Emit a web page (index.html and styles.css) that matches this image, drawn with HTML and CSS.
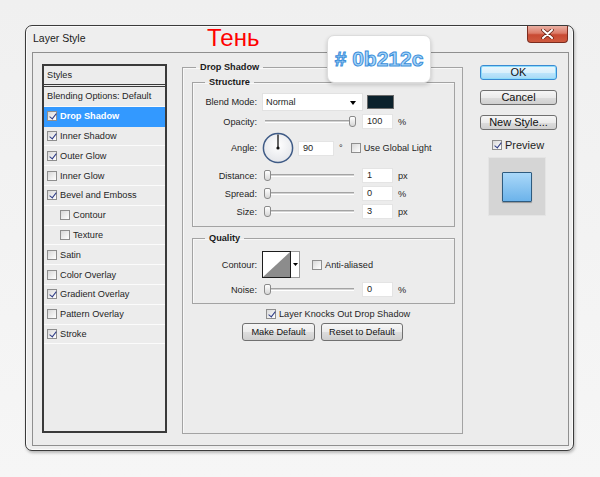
FILE: index.html
```html
<!DOCTYPE html>
<html lang="en">
<head>
    <meta charset="UTF-8">
    <meta name="viewport" content="width=device-width, initial-scale=1.0">
    <title>Layer Style</title>
    <link rel="stylesheet" href="styles.css">
</head>
<body>

    <div class="window">
        <div class="titlebar">
            <span class="title">Layer Style</span>
            <span class="close">
                <svg width="13" height="10" viewBox="0 0 13 10">
                    <path d="M2 1l9 8M11 1l-9 8" stroke="#6a2416" stroke-width="3.6" stroke-linecap="round"/>
                    <path d="M2 1l9 8M11 1l-9 8" stroke="#fff" stroke-width="2" stroke-linecap="round"/>
                </svg>
            </span>
        </div>

        <div class="note">Тень</div>
        <div class="hex-tip"># 0b212c</div>

        <div class="panel">
            <!-- left list of effects -->
            <div class="styles-list">
                <div class="list-head">Styles</div>
                <div class="list-row">Blending Options: Default</div>
                <div class="list-row active"><span class="cb on"></span>Drop Shadow</div>
                <div class="list-row"><span class="cb on"></span>Inner Shadow</div>
                <div class="list-row"><span class="cb on"></span>Outer Glow</div>
                <div class="list-row"><span class="cb"></span>Inner Glow</div>
                <div class="list-row"><span class="cb on"></span>Bevel and Emboss</div>
                <div class="list-row indent"><span class="cb"></span>Contour</div>
                <div class="list-row indent"><span class="cb"></span>Texture</div>
                <div class="list-row"><span class="cb"></span>Satin</div>
                <div class="list-row"><span class="cb"></span>Color Overlay</div>
                <div class="list-row"><span class="cb on"></span>Gradient Overlay</div>
                <div class="list-row"><span class="cb"></span>Pattern Overlay</div>
                <div class="list-row"><span class="cb on"></span>Stroke</div>
            </div>

            <!-- settings -->
            <div class="options">
                <fieldset class="group main">
                    <legend>Drop Shadow</legend>

                    <fieldset class="group section">
                        <legend>Structure</legend>
                        <div class="row blend">
                            <span class="lbl">Blend Mode:</span>
                            <span class="select">Normal<span class="caret"></span></span>
                            <span class="swatch"></span>
                        </div>
                        <div class="row">
                            <span class="lbl">Opacity:</span>
                            <span class="slider"><span class="track"></span><span class="thumb max"></span></span>
                            <span class="field">100</span>
                            <span class="unit">%</span>
                        </div>
                        <div class="row angle">
                            <span class="lbl">Angle:</span>
                            <svg class="dial" width="32" height="32" viewBox="0 0 32 32">
                                <defs>
                                    <radialGradient id="dialFill" cx="50%" cy="40%" r="60%">
                                        <stop offset="0" stop-color="#ffffff"/>
                                        <stop offset="1" stop-color="#e4e6ea"/>
                                    </radialGradient>
                                </defs>
                                <circle cx="16" cy="16" r="14.6" fill="url(#dialFill)" stroke="#3f5b86" stroke-width="1.5"/>
                                <path d="M16 16V2.5" stroke="#111" stroke-width="1.3"/>
                                <circle cx="16" cy="16" r="1.6" fill="#111"/>
                            </svg>
                            <span class="field wide">90</span>
                            <span class="unit">°</span>
                            <span class="cb global"></span>
                            <span class="cb-text">Use Global Light</span>
                        </div>
                        <div class="row gap4">
                            <span class="lbl">Distance:</span>
                            <span class="slider"><span class="track"></span><span class="thumb min"></span></span>
                            <span class="field">1</span>
                            <span class="unit">px</span>
                        </div>
                        <div class="row">
                            <span class="lbl">Spread:</span>
                            <span class="slider"><span class="track"></span><span class="thumb min"></span></span>
                            <span class="field">0</span>
                            <span class="unit">%</span>
                        </div>
                        <div class="row">
                            <span class="lbl">Size:</span>
                            <span class="slider"><span class="track"></span><span class="thumb min"></span></span>
                            <span class="field">3</span>
                            <span class="unit">px</span>
                        </div>
                    </fieldset>

                    <fieldset class="group section quality">
                        <legend>Quality</legend>
                        <div class="row contour">
                            <span class="lbl">Contour:</span>
                            <svg width="38" height="27" viewBox="0 0 38 27">
                                <rect x="0.5" y="0.5" width="37" height="26" fill="#fff" stroke="#9a9a9a"/>
                                <rect x="0.5" y="0.5" width="28" height="26" fill="#fff" stroke="#1d1d1d"/>
                                <polygon points="1,26 28,1 28,26" fill="#8c8c8c"/>
                                <polygon points="31,12 36,12 33.5,15" fill="#000"/>
                            </svg>
                            <span class="cb anti"></span>
                            <span class="cb-text">Anti-aliased</span>
                        </div>
                        <div class="row gap4">
                            <span class="lbl">Noise:</span>
                            <span class="slider"><span class="track"></span><span class="thumb min"></span></span>
                            <span class="field">0</span>
                            <span class="unit">%</span>
                        </div>
                    </fieldset>

                    <div class="knock">
                        <span class="cb on"></span>
                        <span class="cb-text">Layer Knocks Out Drop Shadow</span>
                    </div>

                    <div class="defaults">
                        <button class="btn make">Make Default</button>
                        <button class="btn reset">Reset to Default</button>
                    </div>
                </fieldset>
            </div>

            <!-- dialog buttons -->
            <div class="actions">
                <button class="btn act ok">OK</button>
                <button class="btn act">Cancel</button>
                <button class="btn act">New Style...</button>
                <div class="preview-toggle">
                    <span class="cb on"></span>
                    <span>Preview</span>
                </div>
                <div class="preview-box">
                    <span class="preview-square"></span>
                </div>
            </div>
        </div>
    </div>

</body>
</html>
```

FILE: styles.css
```css
* {
    box-sizing: border-box;
}
body {
    margin: 0;
    padding: 25px 0 0 25px;
    min-height: 100vh;
    background: linear-gradient(#f0f0f0, #f6f6f6);
    font: 9.2px "Liberation Sans", Arial, sans-serif;
    color: #1f1f1f;
}
.window {
    position: relative;
    width: 549px;
    height: 426px;
    border: 1px solid #3b3b3b;
    border-radius: 7px;
    background: #eeeeee;
    box-shadow: inset 0 0 0 1px #fbfbfb, 1px 2px 3px rgba(0, 0, 0, 0.25);
    display: flex;
    flex-direction: column;
}
.titlebar {
    height: 26px;
    flex: none;
    display: flex;
    justify-content: space-between;
    align-items: flex-start;
    padding: 0 5px 0 7px;
}
.title {
    padding-top: 5px;
    font-size: 10.5px;
    line-height: 14px;
    color: #1b1b1b;
}
.close {
    width: 41px;
    height: 17px;
    display: flex;
    align-items: center;
    justify-content: center;
    border: 1px solid #7b2c1f;
    border-top: none;
    border-radius: 0 0 4px 4px;
    background: linear-gradient(#eab0a3 0%, #dc7b68 45%, #c84a33 55%, #cf5a3f 100%);
}
.note {
    position: absolute;
    left: 181px;
    top: 0;
    font-size: 24px;
    line-height: 24px;
    color: #ff0000;
}
.hex-tip {
    position: absolute;
    left: 301px;
    top: 9px;
    width: 104px;
    height: 48px;
    background: #fff;
    border: 1px solid #dcdcdc;
    border-radius: 7px;
    box-shadow: 0 2px 4px rgba(0, 0, 0, 0.18);
    text-align: center;
    font-size: 21px;
    font-weight: bold;
    line-height: 46px;
    color: #acd7f8;
    -webkit-text-stroke: 1px #3c8fdb;
    z-index: 2;
}
.panel {
    flex: 1;
    margin: 0 4px 4px 6px;
    border: 1px solid #8f8f8f;
    background: #ececec;
    display: flex;
    align-items: flex-start;
    padding: 8px 0 0 9px;
}

/* styles list */
.styles-list {
    width: 125px;
    height: 369px;
    margin-top: 3px;
    border: 2px solid #3a3a3a;
    background: #ececec;
}
.list-head {
    height: 21px;
    padding: 3px 0 0 3px;
    line-height: 12px;
    border-bottom: 3px double #3a3a3a;
}
.list-row {
    height: 19.8px;
    display: flex;
    align-items: center;
    gap: 3px;
    padding-left: 3px;
    border-bottom: 1px solid #fbfbfb;
}
.list-row.indent {
    padding-left: 16px;
}
.list-row.active {
    background: #3399ff;
    border-bottom-color: #3399ff;
    color: #fff;
    font-weight: bold;
}
.cb {
    position: relative;
    flex: none;
    width: 10px;
    height: 10px;
    border: 1px solid #8e8e8e;
    background: linear-gradient(135deg, #d8d8d8, #ffffff);
}
.cb.on::after {
    content: "";
    position: absolute;
    left: 3px;
    top: 0;
    width: 3px;
    height: 6px;
    border: solid #2e3c86;
    border-width: 0 1.5px 1.5px 0;
    transform: rotate(38deg);
}
.cb-text {
    margin-left: 3px;
}

/* options */
.options {
    margin-left: 15px;
    width: 281px;
}
.group {
    margin: 0;
    padding: 0;
    min-width: 0;
    border: 1px solid #a3a3a3;
    box-shadow: inset 1px 1px 0 #f8f8f8;
}
.group legend {
    margin-left: 13px;
    padding: 0 4px;
    font-weight: bold;
    line-height: 12px;
    color: #1a1a1a;
}
.main {
    height: 373px;
}
.section {
    margin: 3px 7px 0 9px;
    padding: 5px 0 7px;
}
.section legend {
    margin-left: 12px;
}
.quality {
    margin-top: 5px;
    padding: 7px 0 6px;
}
.row {
    display: flex;
    align-items: center;
    height: 15px;
    margin-top: 3px;
}
.row.blend {
    height: 18px;
    margin-top: 0;
}
.row.angle {
    height: 32px;
}
.row.contour {
    height: 27px;
    margin-top: 0;
}
.row.gap4 {
    margin-top: 4px;
}
.lbl {
    width: 64px;
    margin-right: 5px;
    text-align: right;
}
.select {
    position: relative;
    width: 101px;
    height: 18px;
    padding-left: 3px;
    line-height: 17px;
    background: #fff;
    border: 1px solid #e2e2e2;
}
.caret {
    position: absolute;
    right: 6px;
    top: 7px;
    border-left: 3.5px solid transparent;
    border-right: 3.5px solid transparent;
    border-top: 4px solid #000;
}
.swatch {
    width: 27px;
    height: 14px;
    margin-left: 4px;
    background: #0b212c;
    border: 1px solid #6a6a6a;
}
.slider {
    position: relative;
    width: 94px;
    height: 15px;
    display: flex;
    align-items: center;
    padding: 0 2px 0 3px;
}
.track {
    flex: 1;
    height: 3px;
    border-top: 1px solid #a4a4a4;
    border-bottom: 1px solid #ffffff;
    background: #d2d2d2;
}
.thumb {
    position: absolute;
    top: 2px;
    width: 7px;
    height: 11px;
    border: 1px solid #8a8a8a;
    border-radius: 2px 2px 3px 3px;
    background: linear-gradient(#ffffff, #d6d6d6);
}
.thumb.min {
    left: 2px;
}
.thumb.max {
    right: 0;
}
.field {
    width: 31px;
    height: 15px;
    margin-left: 6px;
    padding-left: 4px;
    line-height: 13px;
    background: #fff;
    border: 1px solid #e4e4e4;
}
.field.wide {
    width: 36px;
    margin-left: 4px;
}
.unit {
    margin-left: 5px;
}
.cb.global {
    margin-left: 8px;
}
.cb.anti {
    margin-left: 12px;
}
.knock {
    display: flex;
    align-items: center;
    height: 10px;
    margin: 5px 0 0 83px;
}
.defaults {
    display: flex;
    justify-content: center;
    gap: 6px;
    margin-top: 4px;
}
.btn {
    height: 18px;
    padding: 0;
    font: inherit;
    color: #111;
    border: 1px solid #707070;
    border-radius: 3px;
    background: linear-gradient(#f6f6f6 0%, #ebebeb 50%, #dddddd 51%, #cfcfcf 100%);
}
.btn.make {
    width: 73px;
}
.btn.reset {
    width: 82px;
}

/* right column */
.actions {
    margin: 4px 0 0 17px;
    width: 77px;
    display: flex;
    flex-direction: column;
}
.btn.act {
    height: 15px;
    margin-bottom: 10px;
    font-size: 11px;
    line-height: 13px;
}
.btn.ok {
    border-color: #3a8ad2;
    box-shadow: inset 0 0 0 1px #8cdcfb;
    background: linear-gradient(#eaf6fd 0%, #d9f0fc 50%, #bee6fd 51%, #a7d9f5 100%);
}
.preview-toggle {
    display: flex;
    align-items: center;
    gap: 3px;
    height: 10px;
    margin-left: 12px;
    font-size: 11px;
}
.preview-box {
    width: 58px;
    height: 59px;
    margin: 7px 0 0 8px;
    background: #d5d5d5;
    border: 1px solid #e4e4e4;
    display: flex;
    align-items: center;
    justify-content: center;
}
.preview-square {
    width: 30px;
    height: 30px;
    border: 1px solid #2e5b7f;
    border-radius: 1px;
    background: linear-gradient(#aad8f9, #6cb3ea);
    box-shadow: 0 1px 1px rgba(0, 0, 0, 0.3);
}
```
